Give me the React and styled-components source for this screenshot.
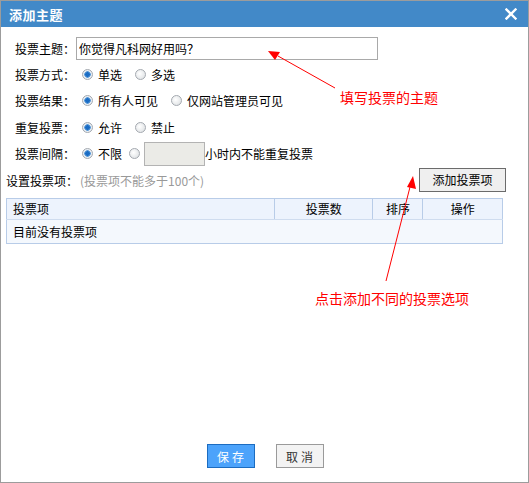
import styled, { createGlobalStyle } from "styled-components";

const Global = createGlobalStyle`
    html, body { margin: 0; padding: 0; background: #fff; }
    body { font-family: "Noto Sans CJK SC", "Liberation Sans", sans-serif; font-size: 12px; color: #000; }
`

export default function App(){
    return(
        <Dialog>
            <Global/>
            <TitleBar>
                <span>添加主题</span>
                <Close width="12" height="12" viewBox="0 0 12 12">
                    <path d="M1.5 1.5 L10.5 10.5 M10.5 1.5 L1.5 10.5" stroke="#fff" strokeWidth="2.4" strokeLinecap="square"/>
                </Close>
            </TitleBar>
            <Content>
                <Form>
                    <Row>
                        <Label>投票主题：</Label>
                        <TextInput defaultValue="你觉得凡科网好用吗？"/>
                    </Row>
                    <Row>
                        <Label>投票方式：</Label>
                        <Option><Radio checked/>单选</Option>
                        <Option><Radio/>多选</Option>
                    </Row>
                    <Row>
                        <Label>投票结果：</Label>
                        <Option><Radio checked/>所有人可见</Option>
                        <Option><Radio/>仅网站管理员可见</Option>
                    </Row>
                    <Row>
                        <Label>重复投票：</Label>
                        <Option><Radio checked/>允许</Option>
                        <Option><Radio/>禁止</Option>
                    </Row>
                    <Row>
                        <Label>投票间隔：</Label>
                        <Option $tight><Radio checked/>不限</Option>
                        <Option><Radio $tight/><HourInput/>小时内不能重复投票</Option>
                    </Row>
                </Form>
                <ItemsHead>
                    <ItemsLabel>设置投票项：<Hint>(投票项不能多于100个)</Hint></ItemsLabel>
                    <AddButton>添加投票项</AddButton>
                </ItemsHead>
                <Table>
                    <thead>
                        <tr>
                            <Th $w={267} $left>投票项</Th>
                            <Th $w={99}>投票数</Th>
                            <Th $w={50}>排序</Th>
                            <Th $w={80}>操作</Th>
                        </tr>
                    </thead>
                    <tbody>
                        <tr><Td colSpan={4}>目前没有投票项</Td></tr>
                    </tbody>
                </Table>
            </Content>
            <Footer>
                <Button $primary>保存</Button>
                <Button>取消</Button>
            </Footer>
            <Note style={{left: 339, top: 86}}>填写投票的主题</Note>
            <Note style={{left: 314, top: 287}}>点击添加不同的投票选项</Note>
            <Arrows width="529" height="483" viewBox="0 0 529 483">
                <line x1="335" y1="88" x2="278" y2="56" stroke="#f00" strokeWidth="1"/>
                <polygon points="268,51 280,52 275,60" fill="#f00"/>
                <line x1="386" y1="281" x2="410" y2="187" stroke="#f00" strokeWidth="1"/>
                <polygon points="413,176 416,189 407,187" fill="#f00"/>
            </Arrows>
        </Dialog>
    )
}

const Dialog = styled.div`
    position: relative;
    width: 527px;
    height: 481px;
    border: 1px solid #9c9c9c;
    display: flex;
    flex-direction: column;
    background: #fff;
    overflow: hidden;
`
const TitleBar = styled.div`
    height: 26px;
    background: #4289c8;
    color: #fff;
    display: flex;
    align-items: center;
    justify-content: space-between;
    padding: 0 11px 0 8px;
    font-size: 13px;
    font-weight: bold;
    letter-spacing: 0.5px;
`
const Close = styled.svg`
    display: block;
`
const Content = styled.div`
    flex: 1;
    padding: 8px 0 0 5px;
`
const Form = styled.div`
    padding-left: 9px;
    display: flex;
    flex-direction: column;
`
const Row = styled.div`
    height: 26.4px;
    display: flex;
    align-items: center;
`
const Label = styled.span`
    width: 62px;
    flex-shrink: 0;
`
const Option = styled.label`
    display: flex;
    align-items: center;
    margin-right: ${p => p.$tight ? 2 : 8}px;
`
const Radio = styled.span`
    width: 9px;
    height: 9px;
    border-radius: 50%;
    border: 1px solid #a4a9b0;
    background: ${p => p.checked
        ? "radial-gradient(circle, #1a6cc4 0 2px, #5a9ad8 2.5px 3px, #e8eef4 3.5px)"
        : "radial-gradient(circle at 40% 40%, #ffffff, #d8dcdf)"};
    margin: 0 ${p => p.$tight ? 4 : 5}px 0 5px;
    flex-shrink: 0;
`
const TextInput = styled.input`
    width: 296px;
    height: 17px;
    border: 1px solid #a9a9a9;
    padding: 2px 2px;
    margin-left: -1px;
    font-family: inherit;
    font-size: 12px;
    color: #000;
    outline: none;
`
const HourInput = styled.span`
    width: 59px;
    height: 22px;
    border: 1px solid #b3b3b3;
    background: #ebebe7;
`
const ItemsHead = styled.div`
    display: flex;
    align-items: center;
    justify-content: space-between;
    width: 500px;
    height: 24px;
    margin-top: 1px;
`
const ItemsLabel = styled.span`
    padding-top: 2px;
`
const Hint = styled.span`
    color: #999;
    margin-left: 2px;
`
const AddButton = styled.button`
    width: 87px;
    height: 24px;
    border: 1px solid #6b6b6b;
    background: #efefef;
    font-family: inherit;
    font-size: 12px;
    color: #000;
    padding: 0;
`
const Table = styled.table`
    margin-top: 6px;
    width: 497px;
    border-collapse: collapse;
    border: 1px solid #b8cce8;
`
const Th = styled.th`
    width: ${p => p.$w}px;
    height: 20px;
    padding: 0 0 0 ${p => p.$left ? 6 : 0}px;
    text-align: ${p => p.$left ? "left" : "center"};
    font-weight: normal;
    background: #edf3fd;
    border: 1px solid #b8cce8;
    border-bottom-color: #cfdcef;
`
const Td = styled.td`
    height: 23px;
    padding: 0 6px;
    background: #f4f8fd;
`
const Footer = styled.div`
    display: flex;
    justify-content: center;
    gap: 21px;
    padding-bottom: 14px;
    padding-left: 1px;
`
const Button = styled.button`
    width: 48px;
    height: 24px;
    padding: 0;
    font-family: inherit;
    font-size: 12px;
    letter-spacing: 3px;
    text-indent: 3px;
    border: 1px solid ${p => p.$primary ? "#1c6cc0" : "#9a9a9a"};
    background: ${p => p.$primary ? "#4ca3fb" : "#f3f3f3"};
    color: ${p => p.$primary ? "#fff" : "#333"};
`
const Note = styled.span`
    position: absolute;
    color: #f00;
    font-size: 14px;
    line-height: 20px;
    white-space: nowrap;
`
const Arrows = styled.svg`
    position: absolute;
    left: -1px;
    top: -1px;
    pointer-events: none;
`
